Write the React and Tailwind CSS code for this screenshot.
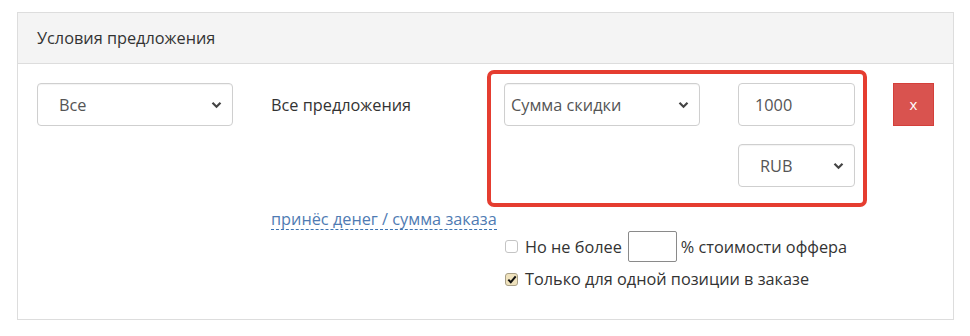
import React from 'react'

const Chevron = () => (
  <svg width="11" height="8" viewBox="0 0 11 8" className="shrink-0">
    <path d="M1.5 1.8 L5.5 5.8 L9.5 1.8" fill="none" stroke="#444" strokeWidth="2.2" />
  </svg>
)

const SelectBox = ({ value, className, textClass }) => (
  <div className={`h-[43px] border border-[#cfcfcf] rounded-[4px] bg-white flex items-center justify-between pr-[10px] shadow-[inset_0_1px_1px_rgba(0,0,0,0.05)] ${className}`}>
    <span className={textClass}>{value}</span>
    <Chevron />
  </div>
)

const Checkbox = ({ checked }) => (
  <span className={`w-[13px] h-[13px] rounded-[3px] border flex items-center justify-center shrink-0 ${checked ? 'bg-[#efe2bd] border-[#a89f86]' : 'bg-white border-[#c4c4c4]'}`}>
    {checked && (
      <svg width="10" height="9" viewBox="0 0 10 9">
        <path d="M1.3 4.6 L3.8 7.2 L8.7 1.4" fill="none" stroke="#111" strokeWidth="2" />
      </svg>
    )}
  </span>
)

const App = () => {
  return (
    <div className="w-[970px] h-[336px] bg-white pt-[12px] pl-[17px] text-[16.3px] leading-[20px] text-[#333]" style={{ fontFamily: '"Open Sans", Arial, sans-serif' }}>
      <div className="w-[937px] h-[308px] border border-[#dddddd]">
        <div className="h-[51px] bg-[#f4f4f4] border-b border-[#dddddd] pl-[19px] flex items-center">
          Условия предложения
        </div>

        <div className="px-[19px]">
          <div className="flex items-start">
            <SelectBox value="Все" className="w-[196px] mt-[19px]" textClass="pl-[21px] text-[#555]" />

            <div className="w-[216px] ml-[38px] mt-[19px] h-[43px] flex items-center">Все предложения</div>

            <div className="w-[380px] mt-[6px] border-4 border-[#e53d30] rounded-[7px] pt-[9px] pl-[13px] pr-[8px] pb-[16px]">
              <div className="grid grid-cols-[196px_117px] gap-x-[38px] gap-y-[18px]">
                <SelectBox value="Сумма скидки" className="w-[196px]" textClass="pl-[6px] text-[#555]" />
                <div className="h-[43px] border border-[#cfcfcf] rounded-[4px] flex items-center pl-[16px] text-[#555]">1000</div>
                <div />
                <SelectBox value="RUB" className="w-[117px]" textClass="pl-[21px] text-[#555]" />
              </div>
            </div>

            <button className="ml-[26px] mt-[19px] w-[41px] h-[43px] bg-[#d9534f] border border-[#d43f3a] text-white text-[15px] leading-none">
              x
            </button>
          </div>

          <div className="ml-[234px] mt-[2px]">
            <span className="inline-block leading-[20px] text-[#4f7bb3] border-b border-dashed border-[#3a72b2]">
              принёс денег / сумма заказа
            </span>
          </div>

          <div className="ml-[468px] mt-[1px]">
            <div className="flex items-center h-[31px]">
              <Checkbox />
              <span className="ml-[7px]">Но не более</span>
              <span className="ml-[6px] w-[49px] h-[31px] border border-[#8a8a8a] rounded-[2px] bg-white" />
              <span className="ml-[4px]">% стоимости оффера</span>
            </div>
            <div className="flex items-center h-[20px] mt-[7px]">
              <Checkbox checked />
              <span className="ml-[7px]">Только для одной позиции в заказе</span>
            </div>
          </div>
        </div>
      </div>
    </div>
  )
}

export default App
